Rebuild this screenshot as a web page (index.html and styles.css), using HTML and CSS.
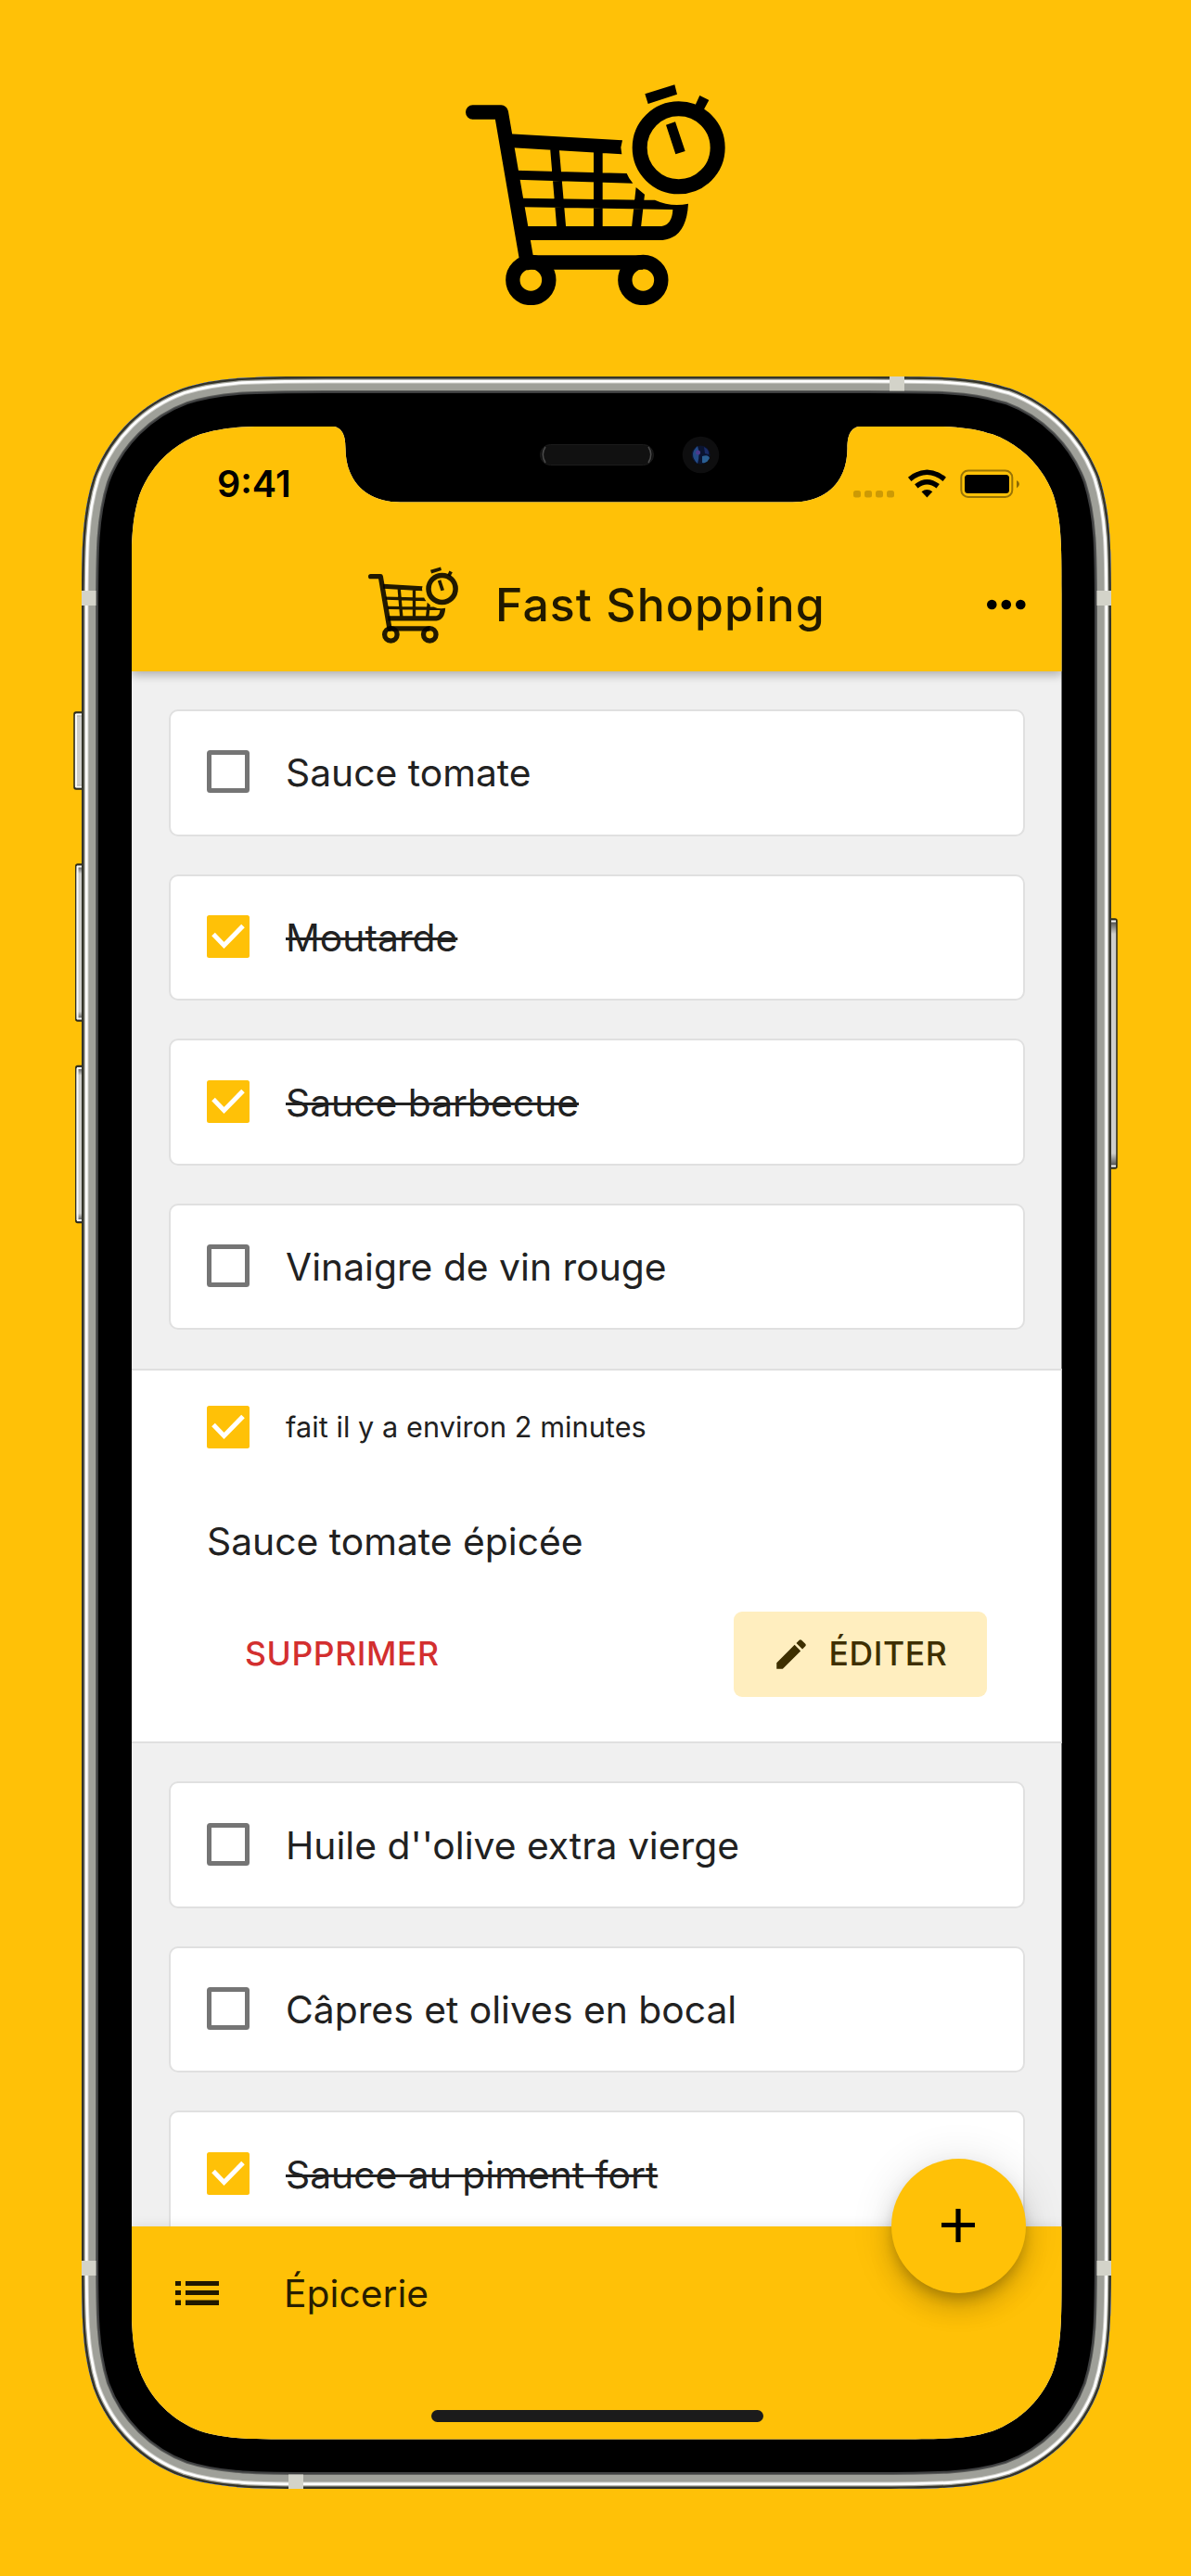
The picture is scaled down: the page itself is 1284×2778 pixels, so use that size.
FILE: index.html
```html
<!DOCTYPE html>
<html lang="fr">
<head>
<meta charset="utf-8">
<title>Fast Shopping</title>
<link rel="stylesheet" href="styles.css">
</head>
<body>
<svg class="defs" aria-hidden="true">
  <symbol id="logo" viewBox="66 62 840 714">
    <path d="M89 152H181L265 640" fill="none" stroke="currentColor" stroke-width="46" stroke-linecap="round" stroke-linejoin="round"/>
    <path d="M205 222L573 243L568 266L571 288L205 266ZM225 340L587 350Q593 366 607 382L230 370ZM245 430L645 436H678Q730 460 786 448Q780 558 703 566H250V521H700Q734 515 736 467L250 459ZM617 395L645 418L633 525H603ZM480 270H509V530H480ZM339 265H368L391 530H361ZM265 615H640V661H265Z" fill="currentColor"/>
    <g fill="none" stroke="currentColor">
      <circle cx="277" cy="695" r="58.500" stroke-width="46"/>
      <circle cx="640" cy="695" r="58.500" stroke-width="46"/>
      <circle cx="755" cy="267" r="126" stroke-width="48"/>
    </g>
    <path d="M714 193L744 183L776 278L745 288ZM646 93L742 63L750 94L656 125ZM823 98L853 113L832 152L805 137Z" fill="currentColor"/>
  </symbol>
  <symbol id="box-off" viewBox="0 0 46 46">
    <rect x="2.500" y="2.500" width="41" height="41" rx="1" fill="none" stroke="#757575" stroke-width="5"/>
  </symbol>
  <symbol id="box-on" viewBox="0 0 46 46">
    <rect width="46" height="46" rx="2.500" fill="#ffc107"/>
    <path d="M7 20.500L18.500 32.500L39 11.500" fill="none" stroke="#fff" stroke-width="5"/>
  </symbol>
</svg>

<svg class="brand"><use href="#logo"/></svg>

<div class="phone">
  <svg class="frame" viewBox="-10 0 1130 2278">
    <defs>
      <path id="body" d="M262.900 0H847.100C922.800 0 960.600 0 994.800 11.300L1001.400 12.900C1045.900 29.100 1080.900 64.100 1097.100 108.600C1110 149.400 1110 187.200 1110 262.900V2015.100C1110 2090.800 1110 2128.600 1097.100 2169.400C1080.900 2213.900 1045.900 2248.900 1001.400 2265.100C960.600 2278 922.800 2278 847.100 2278H262.900C187.200 2278 149.400 2278 108.600 2265.100C64.100 2248.900 29.100 2213.900 12.900 2169.400C0 2128.600 0 2090.800 0 2015.100V262.900C0 187.200 0 149.400 12.900 108.600C29.100 64.100 64.100 29.100 108.600 12.900C149.400 0 187.200 0 262.900 0Z"/>
      <clipPath id="inside"><use href="#body"/></clipPath>
      <linearGradient id="key" x1="0" y1="0" x2="0" y2="1">
        <stop offset="0" stop-color="#333"/><stop offset=".06" stop-color="#cfcfcb"/>
        <stop offset=".94" stop-color="#cfcfcb"/><stop offset="1" stop-color="#333"/>
      </linearGradient>
    </defs>
    <g stroke="#2a2918" stroke-width="1.500" fill="url(#key)">
      <rect x="-8" y="362" width="11" height="83" rx="2"/>
      <rect x="-6.200" y="526" width="9" height="169" rx="2"/>
      <rect x="-6.200" y="743.500" width="9" height="169" rx="2"/>
      <rect x="1106" y="585" width="10" height="269" rx="2"/>
    </g>
    <g stroke="#fafaf6" stroke-width="2">
      <path d="M-6 364.500H0M-6 442.500H0M-5 528.500H0M-5 692.500H0M-5 746H0M-5 910H0M1110 587.500H1115M1110 851.500H1115M-6 364V443M-4.500 528V693M-4.500 746V910"/>
    </g>
    <g clip-path="url(#inside)" fill="none">
      <use href="#body" fill="#000" stroke="#3f4041" stroke-width="36"/>
      <use href="#body" stroke="#5c5d5b" stroke-width="32"/>
      <use href="#body" stroke="#9fa099" stroke-width="30"/>
      <use href="#body" stroke="#d0d0cb" stroke-width="15"/>
      <use href="#body" stroke="#fff" stroke-width="13"/>
      <use href="#body" stroke="#a4a49c" stroke-width="7.500"/>
      <use href="#body" stroke="#34342a" stroke-width="5"/>
    </g>
    <path fill="#d3d3c9" d="M0 231H15.500V247H0ZM1094.500 231H1110V247H1094.500ZM0 2032H15.500V2048H0ZM1094.500 2032H1110V2048H1094.500ZM871 0H887V15.500H871ZM223 2262.500H239V2278H223Z"/>
    <rect x="494.500" y="73.500" width="122" height="22" rx="11" fill="#111" stroke="#1c1c1c"/>
    <path d="M500 76Q494.500 84 500 93M611 76Q616.500 84 611 93" fill="none" stroke="#4a4a4a" stroke-width="1.500"/>
    <circle cx="667.500" cy="84.500" r="19.800" fill="#0e0e0f"/>
    <circle cx="667.500" cy="84.500" r="10" fill="#0b1430"/>
    <path d="M664 75Q654 84 664 94Q667 84 664 75Z" fill="#234a86"/>
    <path d="M669 86Q676 84 677 88Q674 94 669 93Z" fill="#2a5f92"/>
    <path d="M671 76Q677 79 676 84L672 83Z" fill="#1a2c66"/>
    <circle cx="664.500" cy="82" r="2.500" fill="#4c3a8e"/>
  </svg>

  <div class="screen">
    <div class="status">
      <span class="time">9:41</span>
      <svg class="indicators" viewBox="0 0 180 31">
        <g fill="#000" fill-opacity=".2">
          <rect x="0" y="23" width="8" height="7.500" rx="2.500"/><rect x="12" y="23" width="8" height="7.500" rx="2.500"/>
          <rect x="24" y="23" width="8" height="7.500" rx="2.500"/><rect x="36" y="23" width="8" height="7.500" rx="2.500"/>
        </g>
        <g fill="none" stroke="#000" stroke-width="5.500">
          <path d="M60.700 10.800Q79.400 -4.300 98.200 10.800"/>
          <path d="M67.800 18.300Q79.400 9.300 91.200 18.300"/>
        </g>
        <path d="M73.500 24.300Q79.400 19.500 85.300 24.300L79.400 30.500Z"/>
        <rect x="116.300" y="1.500" width="55" height="28.500" rx="7.500" fill="none" stroke="#000" stroke-opacity=".4" stroke-width="2"/>
        <rect x="120" y="6" width="48" height="20" rx="3.500"/>
        <path d="M176 12Q179 13.500 179 16T176 20.500Z" fill-opacity=".45"/>
      </svg>
    </div>
    <header class="appbar">
      <svg class="mark"><use href="#logo"/></svg>
      <h1 class="title">Fast Shopping</h1>
      <svg class="more" viewBox="0 0 42 12"><circle cx="5.300" cy="6" r="5.300"/><circle cx="20.800" cy="6" r="5.300"/><circle cx="36.300" cy="6" r="5.300"/></svg>
    </header>

    <main class="list">
      <div class="card"><svg class="box"><use href="#box-off"/></svg><span class="label">Sauce tomate</span></div>
      <div class="card done"><svg class="box"><use href="#box-on"/></svg><span class="label">Moutarde</span></div>
      <div class="card done"><svg class="box"><use href="#box-on"/></svg><span class="label">Sauce barbecue</span></div>
      <div class="card"><svg class="box"><use href="#box-off"/></svg><span class="label">Vinaigre de vin rouge</span></div>

      <section class="detail">
        <div class="when"><svg class="box"><use href="#box-on"/></svg><span class="ago">fait il y a environ 2 minutes</span></div>
        <p class="name">Sauce tomate épicée</p>
        <div class="actions">
          <span class="delete">SUPPRIMER</span>
          <span class="edit">
            <svg class="pencil" viewBox="0 0 24 24"><path d="M3 17.250V21h3.750L17.810 9.940l-3.750-3.750L3 17.250zM20.710 7.040c.39-.39.39-1.020 0-1.410l-2.340-2.340a.996.996 0 0 0-1.410 0l-1.830 1.830 3.750 3.750 1.830-1.830z" fill="currentColor"/></svg>
            <span>ÉDITER</span>
          </span>
        </div>
      </section>

      <div class="card"><svg class="box"><use href="#box-off"/></svg><span class="label">Huile d''olive extra vierge</span></div>
      <div class="card"><svg class="box"><use href="#box-off"/></svg><span class="label">Câpres et olives en bocal</span></div>
      <div class="card done"><svg class="box"><use href="#box-on"/></svg><span class="label">Sauce au piment fort</span></div>
    </main>

    <footer class="bottom">
      <div class="current">
        <svg class="lines" viewBox="0 0 47 26"><path d="M0 0H6V5H0ZM11 0H47V5H11ZM0 10H6V15H0ZM11 10H47V15H11ZM0 20.500H6V26H0ZM11 20.500H47V26H11Z" fill="currentColor"/></svg>
        <span class="shop">Épicerie</span>
      </div>
      <div class="home"></div>
      <div class="fab"><svg class="plus" viewBox="0 0 36 36"><path d="M18 0V36M0 17.500H36" stroke="#000" stroke-width="5.200"/></svg></div>
    </footer>
  </div>
</div>
</body>
</html>
```
FILE: styles.css
```css
* { box-sizing: border-box; }

body {
  margin: 0;
  width: 1284px;
  height: 2778px;
  overflow: hidden;
  background: #ffc107;
  color: #212121;
  font-family: Inter, "Liberation Sans", sans-serif;
  display: flex;
  flex-direction: column;
}

svg { display: block; flex: none; }

.defs { position: absolute; width: 0; height: 0; }

.brand {
  width: 280px;
  height: 238px;
  margin: 91px 0 77px 502px;
  color: #000;
}

.phone {
  position: relative;
  width: 1110px;
  height: 2278px;
  margin-left: 88px;
  padding: 53.500px;
}

.frame {
  position: absolute;
  top: 0;
  left: -10px;
  width: 1130px;
  height: 2278px;
}

.screen {
  position: relative;
  width: 1003px;
  height: 2171px;
  display: flex;
  flex-direction: column;
  background: #f0f0f0;
  clip-path: path("M180.4 0H213.500C226 0 231 7 231 24C231 60 254 82 290 82H713C749 82 772 60 772 24C772 7 777 0 789.500 0H822.600C874.600 0 900.500 0 924 7.700L928.500 8.800C959 20 983 44 994.200 74.500C1003 102.500 1003 128.400 1003 180.400V1990.600C1003 2042.600 1003 2068.500 994.200 2096.500C983 2127 959 2151 928.500 2162.200C900.500 2171 874.600 2171 822.600 2171H180.400C128.400 2171 102.500 2171 74.500 2162.200C44 2151 20 2127 8.800 2096.500C0 2068.500 0 2042.600 0 1990.600V180.400C0 128.400 0 102.500 8.800 74.500C20 44 44 20 74.500 8.800C102.500 0 128.400 0 180.400 0Z");
}

.status {
  height: 125px;
  padding: 38px 44.500px 39px 92.500px;
  background: #ffc107;
  display: flex;
  align-items: center;
  justify-content: space-between;
  z-index: 2;
}

.time {
  font-size: 39.500px;
  font-weight: 600;
  line-height: 48px;
  color: #000;
}

.indicators { width: 180px; height: 31px; }

.appbar {
  height: 139.500px;
  padding: 0 39px 4px 255px;
  background: #ffc107;
  color: rgba(0, 0, 0, .87);
  display: flex;
  align-items: center;
  z-index: 1;
  box-shadow: 0 2px 12px rgba(0, 0, 0, .22), 0 5px 8px rgba(0, 0, 0, .1);
}

.mark { width: 97px; height: 83px; }

.title {
  margin: 0 0 0 40.500px;
  font-size: 50px;
  font-weight: 500;
  line-height: 60px;
  letter-spacing: 1.050px;
  white-space: nowrap;
}

.more { width: 42px; height: 12px; margin-left: auto; fill: #000; }

.list {
  flex: 1;
  min-height: 0;
  overflow: hidden;
  padding-top: 41.200px;
  display: flex;
  flex-direction: column;
  gap: 41.100px;
}

.card {
  flex: none;
  height: 136.500px;
  margin: 0 40px 0 40.500px;
  padding: 0 39px;
  display: flex;
  align-items: center;
  gap: 39px;
  background: #fff;
  border: 2px solid #e0e0e0;
  border-radius: 10px;
}

.box { width: 46px; height: 46px; }

.card .box { margin-bottom: 2px; }

.label, .name, .shop {
  font-size: 40.800px;
  line-height: 48px;
  white-space: nowrap;
}

.done .label {
  text-decoration: line-through;
  text-decoration-thickness: 3px;
}

.detail {
  flex: none;
  height: 404.600px;
  padding: 38.800px 80.500px 0 81.500px;
  background: #fff;
  border: solid #e0e0e0;
  border-width: 2px 0;
  display: flex;
  flex-direction: column;
}

.when { display: flex; align-items: center; gap: 39px; }

.ago {
  font-size: 30.600px;
  line-height: 46px;
  letter-spacing: .080px;
  white-space: nowrap;
}

.name { margin: 76px 0 0; }

.actions {
  margin-top: 52px;
  padding-left: 41px;
  display: flex;
  align-items: center;
  justify-content: space-between;
  font-size: 35.500px;
  font-weight: 500;
  line-height: 44px;
  letter-spacing: .600px;
}

.delete { color: #d32f2f; }

.edit {
  width: 273.500px;
  height: 92px;
  padding-left: 41px;
  border-radius: 9px;
  background: #ffeebf;
  color: #3e2f00;
  display: flex;
  align-items: center;
  gap: 20px;
}

.pencil { width: 42px; height: 42px; }

.bottom {
  position: relative;
  height: 230px;
  padding: 48px 0 0 47.500px;
  background: #ffc107;
  color: rgba(0, 0, 0, .87);
  display: flex;
  flex-direction: column;
  box-shadow: 0 0 12px rgba(0, 0, 0, .1);
}

.current { display: flex; align-items: center; gap: 70px; }

.lines { width: 47px; height: 26px; }

.home {
  width: 358px;
  height: 13px;
  margin: 102px 0 0 276px;
  border-radius: 7px;
  background: #1b1b1b;
}

.fab {
  position: absolute;
  right: 39px;
  top: -73px;
  width: 145px;
  height: 145px;
  border-radius: 50%;
  background: #ffc107;
  display: flex;
  align-items: center;
  justify-content: center;
  box-shadow: 0 8px 13px -3px rgba(0, 0, 0, .2), 0 16px 27px rgba(0, 0, 0, .14), 0 3px 48px rgba(0, 0, 0, .12);
}

.plus { width: 36px; height: 36px; }
```
